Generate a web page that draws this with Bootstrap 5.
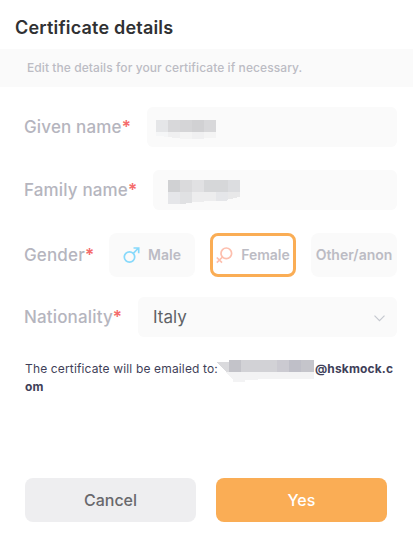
<!DOCTYPE html>
<html lang="en">
<head>
<meta charset="utf-8">
<meta name="viewport" content="width=device-width, initial-scale=1">
<title>Certificate details</title>
<link href="https://cdn.jsdelivr.net/npm/bootstrap@5.3.0/dist/css/bootstrap.min.css" rel="stylesheet">
<style>
body{font-family:Inter,"Liberation Sans",sans-serif;background:#fff;color:#303133;height:549px;overflow:hidden}
.title{height:49px;padding:5px 0 0 15px;font-size:18px;font-weight:600;letter-spacing:.2px}
.hint{height:38px;padding-left:27px;background:#fafafa;color:#bcbcc4;font-size:12px;font-weight:500;letter-spacing:.08px}
.form-area{padding:20px 16px 0 24px}
.field-row{height:40px;margin-bottom:23px}
.gender-row{height:44px;margin-bottom:20px}
.label-text{color:#b5b5be;font-size:17px;font-weight:500;line-height:24px;letter-spacing:.15px;white-space:nowrap}
.label-text b{color:#f56c6c;font-weight:600}
.field{background:#fafafa;border-radius:6px;height:40px}
.given{width:250px;padding:13px 0 0 9px}
.family{width:244px;padding:10px 0 0 15px}
.country{width:259px;padding:2px 12px 0 15px;font-size:17px;color:#606266}
.choices{gap:15px}
.choice{width:86px;height:44px;border:0;border-radius:8px;background:#fafafa;color:#bcbcc4;font-size:14px;font-weight:600;padding:0 0 2px;white-space:nowrap}
.choice svg{margin:2px 8px 0 0}
.choice.selected{background:#fff;border:3px solid #faad55}
.email{padding:0 0 0 25px;margin-top:23px;height:36px;font-size:12px;line-height:18px;color:#3f3f59;letter-spacing:.15px;white-space:nowrap}
.actions{padding-left:25px;gap:20px;margin-top:82px}
.action{width:171px;height:44px;border:0;border-radius:8px;font-size:16px;font-weight:500;padding:0}
.cancel{background:#eeeef0;color:#68686c}
.confirm{background:#faad55;color:#fff}
svg{display:block;flex:none}
.email svg{display:inline-block;vertical-align:top;margin:0 0 -4px -1px}
.email strong{letter-spacing:.15px}
</style>
</head>
<body>
<header class="title d-flex align-items-center">Certificate details</header>
<div class="hint d-flex align-items-center">Edit the details for your certificate if necessary.</div>
<main>
<div class="form-area">
 <div class="field-row d-flex align-items-center justify-content-between">
  <div class="label-text">Given name<b>*</b></div>
  <div class="field given">
   <svg width="60" height="19" shape-rendering="crispEdges"><path fill="#e5e6e8" d="M0 0h12v12H0z"/><path fill="#d8d8da" d="M12 0h12v12H12zM48 0h12v12H48z"/><path fill="#d5d5d7" d="M24 0h12v12H24z"/><path fill="#d1d1d3" d="M36 0h12v12H36z"/><path fill="#f5f6f7" d="M0 12h12v5H8v-1H0z"/><path fill="#f0f0f1" d="M12 12h12v6h-8v-1h-4zM36 12h12v7H36z"/><path fill="#f4f4f4" d="M24 12h12v7H24zM48 12h12v6H48z"/></svg>
  </div>
 </div>
 <div class="field-row d-flex align-items-center justify-content-between">
  <div class="label-text">Family name<b>*</b></div>
  <div class="field family">
   <svg width="72" height="24" shape-rendering="crispEdges"><path fill="#d0d1d3" d="M0 0h12v12H0z"/><path fill="#dadadc" d="M12 0h12v12H12z"/><path fill="#e1e1e3" d="M24 0h12v12H24z"/><path fill="#d6d7d9" d="M36 0h24v12H36z"/><path fill="#dcdde0" d="M60 0h12v12H60z"/><path fill="#e5e6e9" d="M0 12h12v12H0zM48 12h12v8l-2 1H48z"/><path fill="#e0e1e3" d="M12 12h12v11h-6v1h-6z"/><path fill="#ededee" d="M24 12h24v9H36v1H24z"/><path fill="#e8e8e9" d="M60 12h12v5h-3v1h-4v1h-5z"/></svg>
  </div>
 </div>
 <div class="gender-row d-flex align-items-center justify-content-between">
  <div class="label-text">Gender<b>*</b></div>
  <div class="choices d-flex">
   <button class="choice d-flex align-items-center justify-content-center"><svg width="17" height="17" viewBox="0 0 17 17" fill="none" stroke="#87d9fb" stroke-width="1.7"><circle cx="6.5" cy="10" r="5.2"/><path d="M10.3 6.3 15.5 1M10.5 1h5.2v5.3"/></svg>Male</button>
   <button class="choice selected d-flex align-items-center justify-content-center"><svg width="17" height="17" viewBox="0 0 17 17" fill="none" stroke="#fdbfae" stroke-width="1.7"><circle cx="10.3" cy="6.3" r="5.3"/><path d="M6.5 10 .8 15.7M.8 10.5 6 15.7"/></svg>Female</button>
   <button class="choice">Other/anon</button>
  </div>
 </div>
 <div class="d-flex align-items-center justify-content-between">
  <div class="label-text">Nationality<b>*</b></div>
  <div class="field country d-flex align-items-center justify-content-between">Italy<svg width="11" height="7" viewBox="0 0 11 7" fill="none" stroke="#c5c8cf" stroke-width="1.2"><path d="m.5.7 5 5 5-5"/></svg></div>
 </div>
</div>
<div class="email">The certificate will be emailed to:<svg width="98" height="22" shape-rendering="crispEdges"><path fill="#dadadd" d="M0 2h12v10H9z"/><path fill="#c3c3c9" d="M12 0h12v12H12z"/><path fill="#d2d2d6" d="M24 0h36v12H24z"/><path fill="#cbcad1" d="M60 0h12v12H60z"/><path fill="#bfbfc8" d="M72 0h12v12H72z"/><path fill="#c5c5cb" d="M84 0h13v12H84z"/><path fill="#f3f3f4" d="M9 12h88v7H41v1H28v2H16v-2z"/></svg><strong>@hskmock.c<br>om</strong></div>
<div class="actions d-flex">
 <button class="action cancel">Cancel</button>
 <button class="action confirm">Yes</button>
</div>
</main>
<script src="https://cdn.jsdelivr.net/npm/bootstrap@5.3.0/dist/js/bootstrap.bundle.min.js"></script>
</body>
</html>
